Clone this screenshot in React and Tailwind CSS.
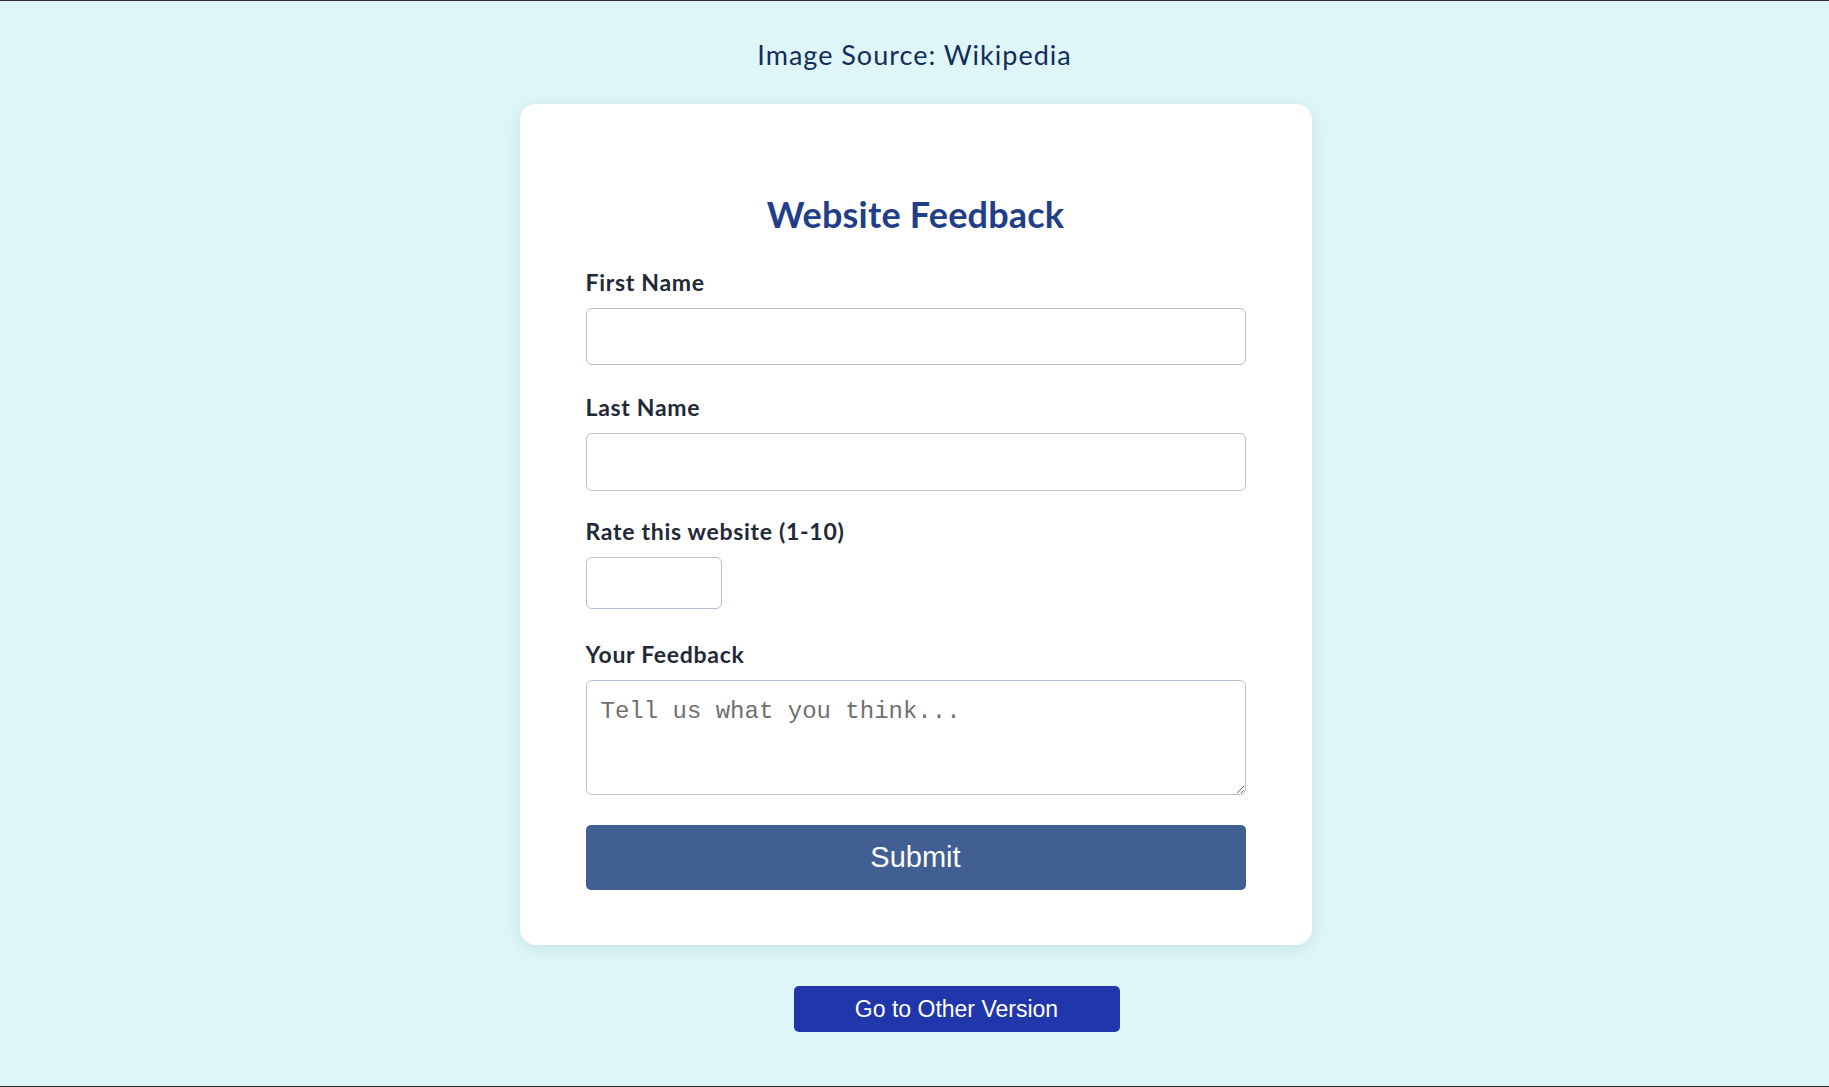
import { useState } from "react";

const labelClass = "mb-[12px] block text-[23px] leading-[28px] font-bold tracking-[0.7px] text-[#1f2937]";
const inputClass = "block rounded-[6px] border border-[#b3c0d4] bg-white px-[14px] outline-none";

function Field({ id, label, children, gap }) {
  return (
    <div className={gap}>
      <label className={labelClass} htmlFor={id}>
        {label}
      </label>
      {children}
    </div>
  );
}

export default function App() {
  const [firstName, setFirstName] = useState("");
  const [lastName, setLastName] = useState("");
  const [rating, setRating] = useState("");
  const [feedback, setFeedback] = useState("");

  return (
    <div className="h-screen overflow-hidden border-y border-[#2b2b2b] bg-[#dff6f8] font-['Lato',sans-serif]">
      <p className="pt-[38px] text-center text-[27px] leading-[32px] tracking-[1px] text-[#112d5c]">
        Image Source: Wikipedia
      </p>

      <div className="mx-auto mt-[33px] w-[792px] translate-x-[1px] rounded-[16px] bg-white px-[66px] pt-[88px] pb-[55px] shadow-[0_4px_18px_rgba(40,110,130,0.14)]">
        <h1 className="mb-[32px] text-center text-[36px] leading-[44px] font-bold tracking-[0.2px] text-[#213f88]">
          Website Feedback
        </h1>

        <form onSubmit={(event) => event.preventDefault()}>
          <Field id="first-name" label="First Name" gap="mb-[28px]">
            <input
              className={`${inputClass} h-[57px] w-full`}
              id="first-name"
              type="text"
              value={firstName}
              onChange={(event) => setFirstName(event.target.value)}
            />
          </Field>
          <Field id="last-name" label="Last Name" gap="mb-[26px]">
            <input
              className={`${inputClass} h-[58px] w-full`}
              id="last-name"
              type="text"
              value={lastName}
              onChange={(event) => setLastName(event.target.value)}
            />
          </Field>
          <Field id="rating" label="Rate this website (1-10)" gap="mb-[31px]">
            <input
              className={`${inputClass} h-[52px] w-[136px]`}
              id="rating"
              type="text"
              value={rating}
              onChange={(event) => setRating(event.target.value)}
            />
          </Field>
          <Field id="feedback" label="Your Feedback" gap="mb-[30px]">
            <textarea
              className={`${inputClass} h-[115px] w-full pt-[16px] pb-[10px] font-['Liberation_Mono',monospace] text-[24px] leading-[29px] placeholder:text-[#6f6f6f]`}
              id="feedback"
              placeholder="Tell us what you think..."
              value={feedback}
              onChange={(event) => setFeedback(event.target.value)}
            />
          </Field>
          <button
            className="block h-[65px] w-full rounded-[5px] bg-[#425f93] font-['Liberation_Sans',sans-serif] text-[29px] text-white"
            type="submit"
          >
            Submit
          </button>
        </form>
      </div>

      <div className="mt-[41px] flex justify-center">
        <button
          className="ml-[84px] h-[46px] w-[326px] rounded-[5px] bg-[#2236ab] font-['Liberation_Sans',sans-serif] text-[23px] text-white"
          type="button"
        >
          Go to Other Version
        </button>
      </div>
    </div>
  );
}
